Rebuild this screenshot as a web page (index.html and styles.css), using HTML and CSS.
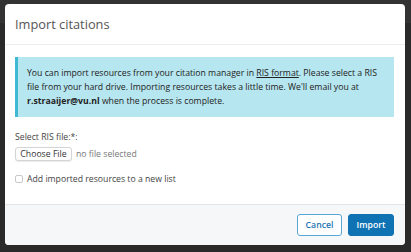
FILE: index.html
```html
<!DOCTYPE html>
<html lang="en">
<head>
  <meta charset="UTF-8" />
  <title>Import citations</title>
  <link rel="stylesheet" href="styles.css">
</head>
<body>

  <div class="backdrop">
    <div class="modal">
      <div class="modal-header">
        <h2 class="modal-title">Import citations</h2>
      </div>

      <div class="modal-body">
        <p class="alert">You can import resources from your citation manager in <a href="#">RIS format</a>. Please select a RIS file from your hard drive. Importing resources takes a little time. We'll email you at <strong>r.straaijer@vu.nl</strong> when the process is complete.</p>

        <label class="field-label">Select RIS file:*:</label>
        <div class="file-row">
          <span class="file-btn">Choose File</span>
          <span class="file-name">no file selected</span>
        </div>

        <label class="check-row"><span class="check-box"></span> Add imported resources to a new list</label>
      </div>

      <div class="modal-footer">
        <button class="btn btn-cancel">Cancel</button>
        <button class="btn btn-primary">Import</button>
      </div>
    </div>
  </div>

</body>
</html>
```

FILE: styles.css
```css
body {
  margin: 0;
  font-family: "Open Sans", Arial, sans-serif;
  background: linear-gradient(#333 0, #333 23px, #2a2a2a 23px);
  height: 252px;
  overflow: hidden;
}
.backdrop {
  padding: 4px 6px 0 5px;
}
.modal {
  background: #fff;
  border-radius: 4px;
  width: 400px;
  height: 241px;
  display: flex;
  flex-direction: column;
  overflow: hidden;
  color: #333;
}
.modal-header {
  height: 40px;
  border-bottom: 1px solid #eceef1;
  padding: 0 10px;
  display: flex;
  align-items: center;
}
.modal-title {
  margin: 0;
  font-size: 12.8px;
  font-weight: 400;
  color: #555;
}
.modal-body {
  flex: 1;
  padding: 12px 11px 0 10px;
}
.alert {
  margin: 0;
  background: #b6e6ef;
  border-left: 3px solid #3fb9d3;
  padding: 9px 10px 9px 9px;
  font-size: 8.7px;
  line-height: 14px;
  color: #222;
}
.alert a {
  color: #222;
}
.field-label {
  display: block;
  margin-top: 13px;
  font-size: 8.7px;
  line-height: 14px;
  color: #444;
}
.file-row {
  display: flex;
  align-items: center;
  margin-top: 3px;
  font-size: 8.7px;
}
.file-btn {
  width: 55px;
  text-align: center;
  border: 1px solid #d4d4d4;
  border-radius: 3px;
  height: 12px;
  line-height: 12px;
  color: #333;
  background: #fff;
  box-shadow: 0 1px 1px rgba(0,0,0,0.08);
}
.file-name {
  margin-left: 4px;
  color: #777;
}
.check-row {
  display: flex;
  align-items: center;
  margin-top: 11px;
  font-size: 8.7px;
  line-height: 14px;
  color: #444;
}
.check-box {
  width: 6px;
  height: 6px;
  border: 1px solid #c8c8c8;
  border-radius: 2px;
  margin-right: 4px;
}
.modal-footer {
  height: 40px;
  background: #f6f7f9;
  border-top: 1px solid #e2e5ea;
  display: flex;
  justify-content: flex-end;
  align-items: center;
  padding: 0 11px;
  gap: 6px;
}
.btn {
  font-family: "Open Sans", Arial, sans-serif;
  font-size: 8.7px;
  font-weight: 600;
  height: 22px;
  border-radius: 3px;
  cursor: pointer;
}
.btn-cancel {
  width: 45px;
  background: #fff;
  border: 1px solid #5aa6d6;
  color: #1d74b4;
}
.btn-primary {
  width: 46px;
  background: #0e72b3;
  border: 1px solid #0e72b3;
  color: #fff;
}
```
